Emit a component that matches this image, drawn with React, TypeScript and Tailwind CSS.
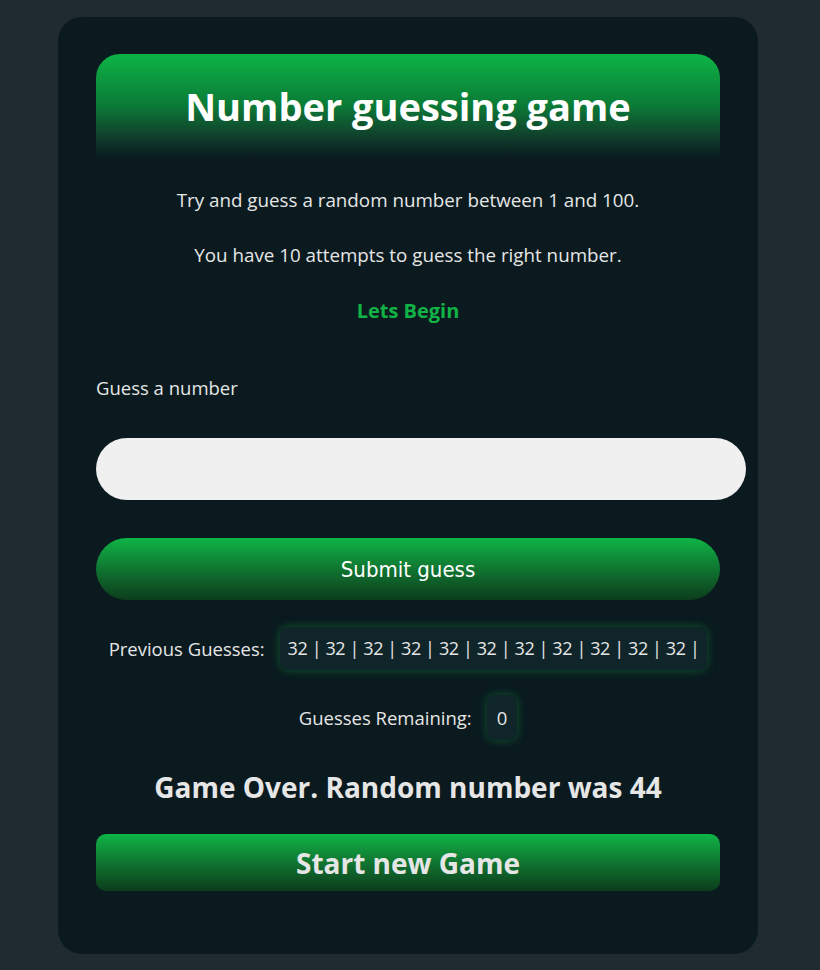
import React, { useState } from 'react';

const App = () => {
  const [guess, setGuess] = useState('');
  const guesses = Array(11).fill(32);

  return (
    <div className="min-h-screen bg-[#1f2b31] pt-[17px] pb-[17px] font-['Open_Sans',sans-serif]">
      <div className="ml-[58px] w-[700px] rounded-[24px] bg-[#0a1a1f] px-[38px] pt-[37px] pb-[63px] text-[#e6e6e6]">
        {/* Header */}
        <div className="flex h-[104px] items-center justify-center rounded-t-[24px] bg-gradient-to-b from-[#0db446] via-[#0a7a36] to-[#0a1a1f]">
          <h1 className="text-[38px] font-bold text-white">Number guessing game</h1>
        </div>

        <p className="mt-[29px] text-center text-[18.8px] leading-[26px]">
          Try and guess a random number between 1 and 100.
        </p>
        <p className="mt-[29px] text-center text-[18.8px] leading-[26px]">
          You have 10 attempts to guess the right number.
        </p>
        <p className="mt-[30px] text-center text-[20px] font-bold leading-[26px] text-[#12b346]">
          Lets Begin
        </p>

        <label htmlFor="guess" className="mt-[51px] block text-[18.5px] leading-[26px]">
          Guess a number
        </label>
        <input
          id="guess"
          type="number"
          value={guess}
          onChange={(e) => setGuess(e.target.value)}
          className="mt-[37px] block h-[62px] w-[650px] rounded-full bg-[#f0f0f0] px-[13px] text-[20px] text-black outline-none"
        />

        <button
          type="button"
          className="mt-[38px] block h-[62px] w-full rounded-full bg-gradient-to-b from-[#0db446] to-[#0b3d1c] text-[22px] text-white font-['DejaVu_Sans_Condensed',sans-serif]"
        >
          Submit guess
        </button>

        <div className="mt-[27px] flex items-center justify-center gap-[15px] text-[18px]">
          <span className="text-[18.5px]">Previous Guesses:</span>
          <span className="rounded-[8px] bg-[#10252a] px-[8px] py-[8px] leading-[27px] tracking-[-0.4px] shadow-[0_0_10px_rgba(20,150,60,0.5)]">
            {guesses.map((g) => `${g} | `).join('').trimEnd()}
          </span>
        </div>

        <div className="mt-[25px] flex items-center justify-center gap-[15px] text-[18.5px]">
          <span>Guesses Remaining:</span>
          <span className="rounded-[8px] bg-[#10252a] px-[10px] py-[9px] leading-[27px] shadow-[0_0_10px_rgba(20,150,60,0.5)]">
            0
          </span>
        </div>

        <h2 className="mt-[28px] text-center text-[28px] font-bold leading-[38px] text-[#e6e6e6]">
          Game Over. Random number was 44
        </h2>

        <button
          type="button"
          className="mt-[28px] block h-[57px] w-full rounded-[10px] bg-gradient-to-b from-[#0db446] to-[#0b3d1c] text-[28px] font-bold text-[#e6e6e6]"
        >
          Start new Game
        </button>
      </div>
    </div>
  );
};

export default App;
